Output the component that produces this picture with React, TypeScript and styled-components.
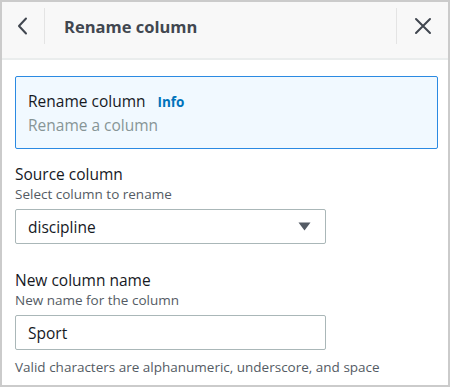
import React from "react";
import styled, { createGlobalStyle } from "styled-components";

const Global = createGlobalStyle`
  html, body { margin: 0; padding: 0; background: #fff; }
  body { font-family: "Open Sans", "Noto Sans", sans-serif; }
  * { box-sizing: border-box; }
`;

const Frame = styled.div`
  width: 450px;
  height: 387px;
  border: 2px solid #cbcbcb;
  background: #fff;
  display: flex;
  flex-direction: column;
  overflow: hidden;
`;

const Header = styled.div`
  height: 58px;
  background: #f8f8f8;
  border-bottom: 2px solid #eaeded;
  display: flex;
  align-items: flex-start;
  padding-top: 5px;
  flex-shrink: 0;
`;

const IconButton = styled.button<{ $w: number }>`
  width: ${(p) => p.$w}px;
  height: 38px;
  border: none;
  background: transparent;
  padding: 0;
  display: flex;
  align-items: center;
  justify-content: center;
  color: #414750;
`;

const Divider = styled.div`
  width: 1px;
  height: 36px;
  margin-top: 1px;
  background: #e4e4e4;
`;

const Title = styled.div`
  flex: 1;
  padding-left: 19px;
  height: 38px;
  display: flex;
  align-items: center;
  font-size: 16.5px;
  font-weight: 700;
  color: #414750;
`;

const Body = styled.div`
  padding: 16px 10px 0 13px;
  display: flex;
  flex-direction: column;
`;

const InfoBox = styled.div`
  border: 1px solid #2b8ae2;
  border-radius: 2px;
  background: #f1f9ff;
  padding: 14px 12px 11px 12px;
  height: 73px;
`;

const InfoTitle = styled.div`
  font-size: 15.5px;
  color: #16191f;
  display: flex;
  align-items: baseline;
  gap: 12px;
  line-height: 20px;
`;

const InfoLink = styled.span`
  font-size: 13.5px;
  font-weight: 700;
  color: #0073bb;
`;

const InfoSub = styled.div`
  font-size: 15.5px;
  color: #879596;
  line-height: 20px;
  margin-top: 3px;
`;

const Field = styled.div<{ $top: number }>`
  margin-top: ${(p) => p.$top}px;
  display: flex;
  flex-direction: column;
`;

const Label = styled.div`
  font-size: 15.5px;
  color: #16191f;
  line-height: 20px;
`;

const Desc = styled.div`
  font-size: 13.5px;
  color: #545b64;
  line-height: 20px;
`;

const Box = styled.div`
  margin-top: 5px;
  width: 311px;
  height: 35px;
  border: 1px solid #aab7b8;
  border-radius: 2px;
  background: #fff;
  display: flex;
  align-items: center;
  justify-content: space-between;
  padding: 0 14px 0 12px;
  font-size: 15.5px;
  color: #16191f;
`;

const Help = styled.div`
  margin-top: 8px;
  font-size: 13.5px;
  color: #545b64;
  line-height: 18px;
`;

const Caret = () => (
  <svg width="13" height="9" viewBox="0 0 13 9">
    <path d="M0.5 0.5 L12.5 0.5 L6.5 8.5 Z" fill="#545b64" />
  </svg>
);

export default function App() {
  return (
    <>
      <Global />
      <Frame>
        <Header>
          <IconButton $w={42} aria-label="Back">
            <svg width="16" height="18" viewBox="0 0 16 18">
              <path d="M11 1.5 L4 9 L11 16.5" fill="none" stroke="#414750" strokeWidth="2" strokeLinecap="round" strokeLinejoin="round" />
            </svg>
          </IconButton>
          <Divider />
          <Title>Rename column</Title>
          <Divider />
          <IconButton $w={51} aria-label="Close">
            <svg width="18" height="18" viewBox="0 0 18 18">
              <path d="M2 2 L16 16 M16 2 L2 16" fill="none" stroke="#414750" strokeWidth="2" strokeLinecap="round" />
            </svg>
          </IconButton>
        </Header>
        <Body>
          <InfoBox>
            <InfoTitle>
              Rename column <InfoLink>Info</InfoLink>
            </InfoTitle>
            <InfoSub>Rename a column</InfoSub>
          </InfoBox>
          <Field $top={15}>
            <Label>Source column</Label>
            <Desc>Select column to rename</Desc>
            <Box>
              <span>discipline</span>
              <Caret />
            </Box>
          </Field>
          <Field $top={26}>
            <Label>New column name</Label>
            <Desc>New name for the column</Desc>
            <Box>
              <span>Sport</span>
            </Box>
            <Help>Valid characters are alphanumeric, underscore, and space</Help>
          </Field>
        </Body>
      </Frame>
    </>
  );
}
